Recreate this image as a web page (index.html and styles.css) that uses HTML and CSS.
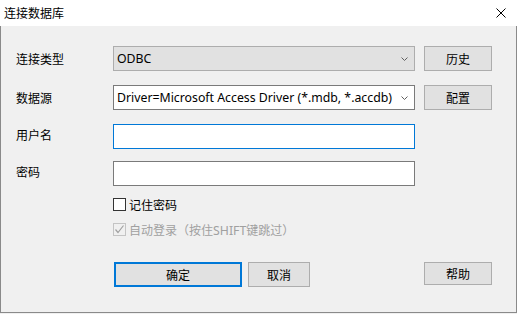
FILE: index.html
```html
<!DOCTYPE html>
<html lang="zh-CN">

<head>
  <meta charset="UTF-8">
  <meta name="viewport" content="width=device-width, initial-scale=1.0">
  <title>连接数据库</title>
  <link rel="stylesheet" href="styles.css">
</head>

<body>
  <div class="window">
    <header class="titlebar">
      <span class="title">连接数据库</span>
      <svg class="close" width="10" height="10" viewBox="0 0 10 10">
        <path d="M0.5 0.5 L9.5 9.5 M9.5 0.5 L0.5 9.5" stroke="#000" stroke-width="1" fill="none" />
      </svg>
    </header>
    <div class="content">
      <div class="row">
        <label class="label">连接类型</label>
        <div class="combo combo-ro">
          <span class="latin">ODBC</span>
          <svg class="chevron" width="7" height="4" viewBox="0 0 7 4"><polyline points="0.5,0.5 3.5,3.5 6.5,0.5" fill="none" stroke="#606060" /></svg>
        </div>
        <button class="btn side">历史</button>
      </div>
      <div class="row">
        <label class="label">数据源</label>
        <div class="combo">
          <span class="latin">Driver=Microsoft Access Driver (*.mdb, *.accdb)</span>
          <svg class="chevron" width="7" height="4" viewBox="0 0 7 4"><polyline points="0.5,0.5 3.5,3.5 6.5,0.5" fill="none" stroke="#606060" /></svg>
        </div>
        <button class="btn side">配置</button>
      </div>
      <div class="row row-tight">
        <label class="label up">用户名</label>
        <div class="input focused"></div>
      </div>
      <div class="row row-tight">
        <label class="label up">密码</label>
        <div class="input"></div>
      </div>
      <div class="check">
        <span class="box"></span>
        <span>记住密码</span>
      </div>
      <div class="check disabled">
        <span class="box">
          <svg width="11" height="11" viewBox="0 0 11 11"><polyline points="1.5,5.5 4,8.5 9.5,1.5" fill="none" stroke="#a0a0a0" stroke-width="1.2" /></svg>
        </span>
        <span>自动登录（按住<span class="latin">SHIFT</span>键跳过）</span>
      </div>
      <div class="actions">
        <button class="btn ok">确定</button>
        <button class="btn cancel">取消</button>
        <button class="btn help">帮助</button>
      </div>
    </div>
  </div>
</body>

</html>
```

FILE: styles.css
```css
* {
  box-sizing: border-box;
}

body {
  margin: 0;
  font-family: "Noto Sans CJK SC", "Noto Sans", sans-serif;
  font-size: 12px;
  color: #000;
  background: #f0f0f0;
}

.window {
  width: 517px;
  height: 313px;
  display: flex;
  flex-direction: column;
}

.titlebar {
  height: 26px;
  background: #fff;
  display: flex;
  align-items: center;
  justify-content: space-between;
  padding: 0 11px 0 4px;
}

.title {
  line-height: 1;
}

.content {
  flex: 1;
  background: #f0f0f0;
  border: 1px solid #8a8a8a;
  border-top: none;
  padding: 20px 0 0 15px;
}

.row {
  display: flex;
  align-items: center;
  height: 25px;
  margin-bottom: 14px;
}

.row-tight {
  margin-bottom: 12px;
}

.label {
  width: 97px;
  line-height: 1;
}

/* labels of the edit boxes sit a little above centre */
.label.up {
  margin-bottom: 4px;
}

.latin {
  font-family: "Noto Sans", sans-serif;
  font-size: 12.3px;
}

.combo {
  width: 302px;
  height: 25px;
  border: 1px solid #7a7a7a;
  background: #fff;
  display: flex;
  align-items: center;
  justify-content: space-between;
  padding: 0 6px 0 3px;
  white-space: nowrap;
}

.combo-ro {
  background: #e1e1e1;
  border-color: #adadad;
}

.chevron {
  flex-shrink: 0;
}

.input {
  width: 302px;
  height: 25px;
  border: 1px solid #7a7a7a;
  background: #fff;
}

.input.focused {
  border-color: #0078d7;
}

.btn {
  font: inherit;
  color: #000;
  background: #e1e1e1;
  border: 1px solid #adadad;
  padding: 0;
  height: 25px;
}

.side {
  width: 68px;
  margin-left: 9px;
}

.check {
  display: flex;
  align-items: center;
  height: 13px;
  margin: 0 0 12px 97px;
  gap: 3px;
}

.check .box {
  width: 13px;
  height: 13px;
  border: 1px solid #333;
  background: #fff;
  display: flex;
  align-items: center;
  justify-content: center;
}

.check.disabled {
  color: #a0a0a0;
}

.check.disabled .box {
  border-color: #c4c4c4;
  background: #f0f0f0;
}

.actions {
  display: flex;
  align-items: flex-start;
  margin: 26px 0 0 98px;
}

.ok {
  width: 128px;
  border: 2px solid #0078d7;
}

.cancel {
  width: 62px;
  margin-left: 6px;
}

.help {
  width: 68px;
  height: 23px;
  margin-left: 114px;
}
```
